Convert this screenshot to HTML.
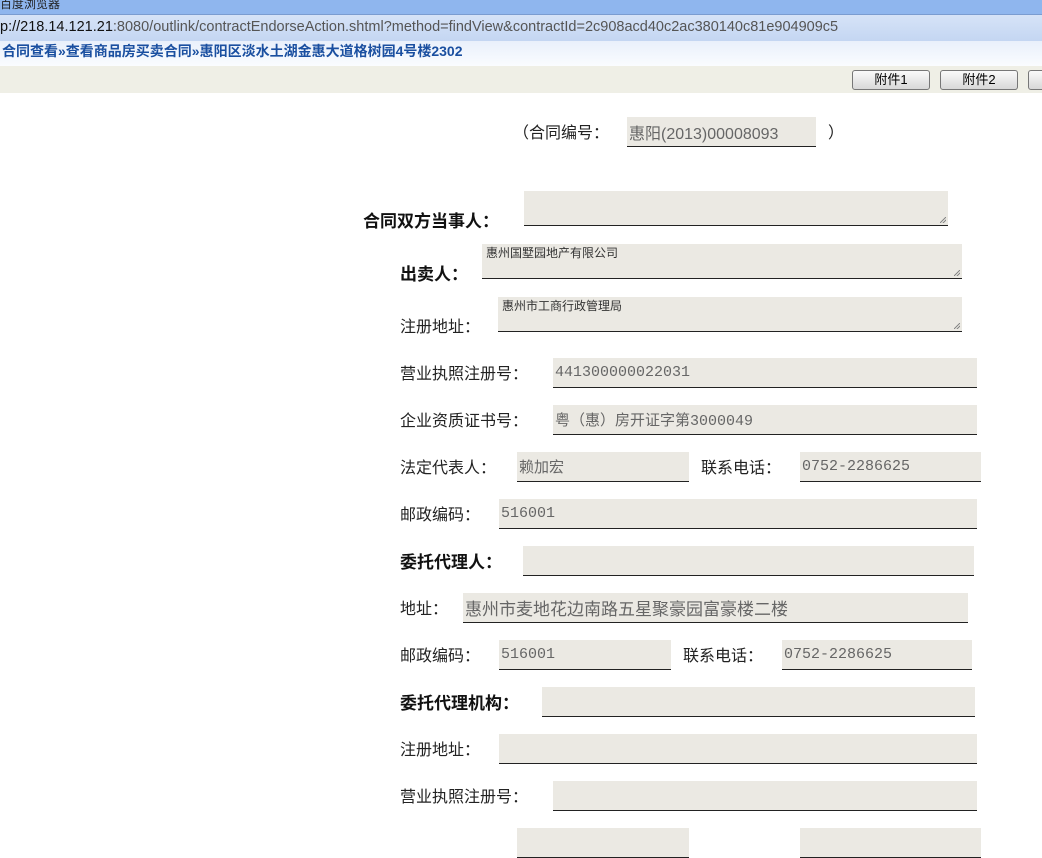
<!DOCTYPE html>
<html><head><meta charset="utf-8"><style>
*{margin:0;padding:0;box-sizing:border-box}
body{width:1042px;height:831px;overflow:hidden;background:#fff;position:relative;font-family:"Liberation Sans","Noto Sans CJK SC",sans-serif;}
.a{position:absolute}
.l{position:absolute;font-size:16px;color:#222;line-height:20px;white-space:nowrap;margin-top:3px}
.b{font-weight:bold;font-size:17px;color:#111}
.f{position:absolute;background:#ebe9e3;border-bottom:1px solid #222;color:#666;font-family:"Liberation Mono","Noto Sans CJK SC",monospace;font-size:15px;padding-left:2px;display:flex;align-items:center;white-space:nowrap}
.t{position:absolute;background:#ebe9e3;border-bottom:1px solid #222;color:#333;font-size:12px;padding:2px 0 0 4px;line-height:14px}
.t:after{content:"";position:absolute;right:2px;bottom:2px;width:6px;height:6px;background:linear-gradient(135deg,transparent 45%,#888 45%,#888 55%,transparent 55%,transparent 70%,#888 70%,#888 80%,transparent 80%)}
.btn{position:absolute;top:70px;height:20px;width:78px;border:1px solid #777;border-radius:3px;background:linear-gradient(#fafafa,#d8d8d8);font-size:13px;text-align:center;line-height:18px;color:#000}
</style></head><body>
<div class="a" style="left:0;top:0;width:1042px;height:14px;background:#8fb6ee;font-size:12px;line-height:8px;color:#222;overflow:hidden">百度浏览器</div>
<div class="a" style="left:0;top:14px;width:1042px;height:27px;background:linear-gradient(#d6e3f7,#c4d6f2);border-top:1px solid #7a9cd0;font-size:14.5px;line-height:24px;color:#555;white-space:nowrap"><span style="color:#111">p://218.14.121.21</span>:8080/outlink/contractEndorseAction.shtml?method=findView&amp;contractId=2c908acd40c2ac380140c81e904909c5</div>
<div class="a" style="left:0;top:41px;width:1042px;height:25px;background:linear-gradient(#e9f0fb,#fafcff);font-size:14px;font-weight:bold;color:#1a4fa0;line-height:20px;padding-left:2px">合同查看»查看商品房买卖合同»惠阳区淡水土湖金惠大道格树园4号楼2302</div>
<div class="a" style="left:0;top:66px;width:1042px;height:27px;background:#efefe6"></div>
<div class="btn" style="left:852px">附件1</div>
<div class="btn" style="left:940px">附件2</div>
<div class="btn" style="left:1028px"></div>

<div class="l" style="left:513px;top:121px">（合同编号：</div>
<div class="f" style="left:627px;top:117px;width:189px;height:30px;font-family:'Liberation Sans','Noto Sans CJK SC',sans-serif;font-size:16px">惠阳(2013)00008093</div>
<div class="l" style="left:828px;top:121px">）</div>

<div class="l b" style="left:363px;top:209px">合同双方当事人：</div>
<div class="t" style="left:524px;top:191px;width:424px;height:35px"></div>
<div class="l b" style="left:400px;top:262px">出卖人：</div>
<div class="t" style="left:482px;top:244px;width:480px;height:35px">惠州国墅园地产有限公司</div>
<div class="l" style="left:400px;top:315px">注册地址：</div>
<div class="t" style="left:498px;top:297px;width:464px;height:35px">惠州市工商行政管理局</div>

<div class="l" style="left:400px;top:362px">营业执照注册号：</div>
<div class="f" style="left:553px;top:358px;width:424px;height:30px">441300000022031</div>
<div class="l" style="left:400px;top:409px">企业资质证书号：</div>
<div class="f" style="left:553px;top:405px;width:424px;height:30px">粤（惠）房开证字第3000049</div>
<div class="l" style="left:400px;top:456px">法定代表人：</div>
<div class="f" style="left:517px;top:452px;width:172px;height:30px">赖加宏</div>
<div class="l" style="left:701px;top:456px">联系电话：</div>
<div class="f" style="left:800px;top:452px;width:181px;height:30px">0752-2286625</div>
<div class="l" style="left:400px;top:503px">邮政编码：</div>
<div class="f" style="left:499px;top:499px;width:478px;height:30px">516001</div>
<div class="l b" style="left:400px;top:550px">委托代理人：</div>
<div class="f" style="left:523px;top:546px;width:451px;height:30px"></div>
<div class="l" style="left:400px;top:597px">地址：</div>
<div class="f" style="left:463px;top:593px;width:505px;height:30px;font-family:'Liberation Sans','Noto Sans CJK SC',sans-serif;font-size:17px;padding-left:2px">惠州市麦地花边南路五星聚豪园富豪楼二楼</div>
<div class="l" style="left:400px;top:644px">邮政编码：</div>
<div class="f" style="left:499px;top:640px;width:172px;height:30px">516001</div>
<div class="l" style="left:683px;top:644px">联系电话：</div>
<div class="f" style="left:782px;top:640px;width:190px;height:30px">0752-2286625</div>
<div class="l b" style="left:400px;top:691px">委托代理机构：</div>
<div class="f" style="left:542px;top:687px;width:433px;height:30px"></div>
<div class="l" style="left:400px;top:738px">注册地址：</div>
<div class="f" style="left:499px;top:734px;width:478px;height:30px"></div>
<div class="l" style="left:400px;top:785px">营业执照注册号：</div>
<div class="f" style="left:553px;top:781px;width:424px;height:30px"></div>
<div class="f" style="left:517px;top:828px;width:172px;height:30px"></div>
<div class="f" style="left:800px;top:828px;width:181px;height:30px"></div>
</body></html>
